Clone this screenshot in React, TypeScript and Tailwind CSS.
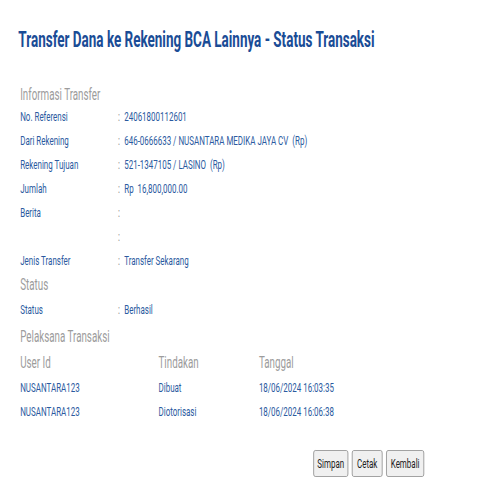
const info = [
  { label: 'No. Referensi', value: '24061800112601' },
  { label: 'Dari Rekening', value: '646-0666633 / NUSANTARA MEDIKA JAYA CV  (Rp)' },
  { label: 'Rekening Tujuan', value: '521-1347105 / LASINO  (Rp)' },
  { label: 'Jumlah', value: 'Rp  16,800,000.00' },
  { label: 'Berita', value: '' },
  { label: '', value: '' },
  { label: 'Jenis Transfer', value: 'Transfer Sekarang' },
];

const pelaksana = [
  { user: 'NUSANTARA123', action: 'Dibuat', date: '18/06/2024 16:03:35' },
  { user: 'NUSANTARA123', action: 'Diotorisasi', date: '18/06/2024 16:06:38' },
];

function Row({ label, value }: { label: string; value: string }) {
  return (
    <div className="flex h-[24px] items-center text-[13px] leading-[24px] text-[#2b5aa0]">
      <span className="w-[160px]">{label}</span>
      <span className="w-[10px] text-[#8a8a8a]">:</span>
      <span className="whitespace-pre">{value}</span>
    </div>
  );
}

function SectionTitle({ children }: { children: string }) {
  return <div className="text-[16px] leading-[20px] text-[#9c9c9c]">{children}</div>;
}

export default function App() {
  return (
    <div className="w-full h-screen overflow-hidden bg-white">
      <div className="w-[813px] origin-top-left scale-x-[0.612] font-[Roboto,sans-serif] pl-[33px] pt-[28px]">
        <h1 className="-ml-[3px] text-[22px] leading-[24px] font-bold text-[#1a4c96]">
          Transfer Dana ke Rekening BCA Lainnya - Status Transaksi
        </h1>

        <div className="mt-[33px]">
          <SectionTitle>Informasi Transfer</SectionTitle>
          {info.map((r, i) => (
            <Row key={i} label={r.label} value={r.value} />
          ))}
        </div>

        <div className="mt-[2px]">
          <SectionTitle>Status</SectionTitle>
          <div className="mt-[3px]">
            <Row label="Status" value="Berhasil" />
          </div>
        </div>

        <div className="mt-[5px]">
          <SectionTitle>Pelaksana Transaksi</SectionTitle>
          <div className="mt-[5px]">
            <div className="grid grid-cols-[226px_164px_1fr] h-[24px] text-[16px] leading-[22px] text-[#9c9c9c]">
              <span>User Id</span>
              <span>Tindakan</span>
              <span>Tanggal</span>
            </div>
            {pelaksana.map((p, i) => (
              <div key={i} className="grid grid-cols-[226px_164px_1fr] h-[24px] text-[13px] leading-[24px] text-[#2b5aa0]">
                <span>{p.user}</span>
                <span>{p.action}</span>
                <span>{p.date}</span>
              </div>
            ))}
          </div>
        </div>

        <div className="mt-[26px] flex gap-[6px] pl-[479px]">
          <button className="h-[27px] w-[57px] rounded-[3px] border border-[#8c8c8c] bg-[#f0f0f0] text-[13px] text-[#222]">Simpan</button>
          <button className="h-[27px] w-[50px] rounded-[3px] border border-[#8c8c8c] bg-[#f0f0f0] text-[13px] text-[#222]">Cetak</button>
          <button className="h-[27px] w-[62px] rounded-[3px] border border-[#8c8c8c] bg-[#f0f0f0] text-[13px] text-[#222]">Kembali</button>
        </div>
      </div>
    </div>
  );
}
